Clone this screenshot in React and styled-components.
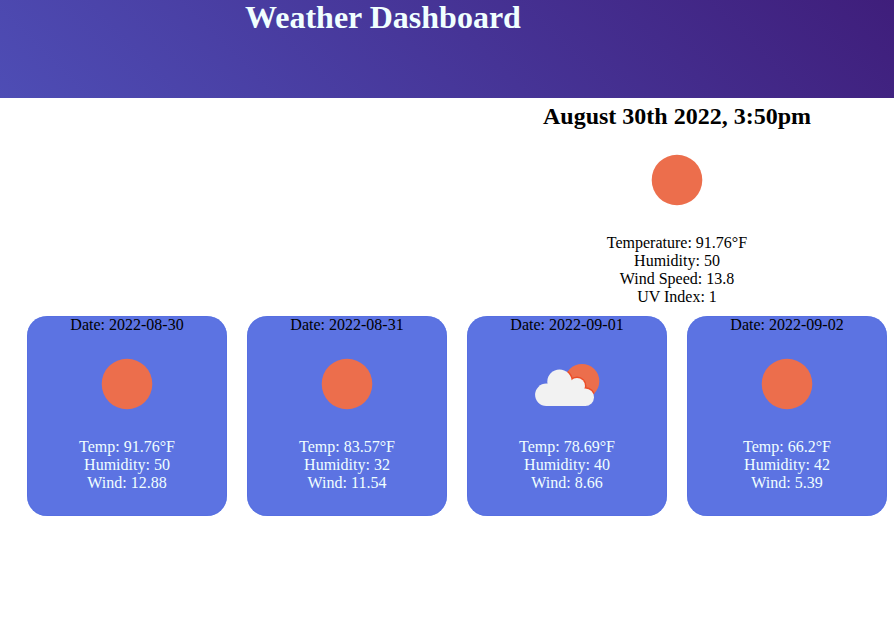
import React from "react";
import styled, { createGlobalStyle } from "styled-components";

const GlobalStyle = createGlobalStyle`
  *, *::before, *::after { box-sizing: border-box; }
  body {
    margin: 0;
    background: #fff;
    color: #000;
    font: 16px/18px "Liberation Serif", "Times New Roman", serif;
    overflow: hidden;
  }
`;

const Header = styled.header`
  height: 98px;
  padding-left: 245px;
  background: linear-gradient(45deg, #4e4db5, #3f1e7b);
`;

const Title = styled.h1`
  margin: 0;
  font-size: 32px;
  line-height: 34px;
  color: azure;
`;

const Current = styled.section`
  display: flex;
  flex-direction: column;
  align-items: center;
  width: 434px;
  margin-left: 460px;
  padding-top: 5px;
  text-align: center;
`;

const Timestamp = styled.h2`
  margin: 0;
  font-size: 24px;
  line-height: 27px;
`;

const Icon = styled.svg`
  display: block;
  width: 100px;
  height: 100px;
  margin-bottom: 4px;
`;

const Reading = styled.p`
  margin: 0;
`;

const Forecast = styled.section`
  display: flex;
  gap: 20px;
  padding: 10px 0 0 27px;
`;

const Card = styled.article`
  display: flex;
  flex: 0 0 200px;
  flex-direction: column;
  align-items: center;
  height: 200px;
  border-radius: 20px;
  background: #5c73e2;
  box-shadow: inset 0 0 1px #3158dc;
  color: azure;
`;

const CardDate = styled.time`
  color: #000;
`;

function Sun() {
  return (
    <Icon viewBox="0 0 100 100" role="img" aria-label="Clear sky">
      <circle cx="50" cy="50" r="25.3" fill="#ec6e4c" />
    </Icon>
  );
}

function CloudShape() {
  return (
    <>
      <circle cx="29.3" cy="60.8" r="11.2" />
      <circle cx="42.5" cy="47.6" r="12.2" />
      <circle cx="60" cy="52" r="8" />
      <circle cx="68.200" cy="63.200" r="8.800" />
      <path d="M29 52H62L69 60V72H29Z" />
    </>
  );
}

function PartlyCloudy() {
  return (
    <Icon viewBox="0 0 100 100" role="img" aria-label="Few clouds">
      <clipPath id="sun-disc">
        <circle cx="65" cy="47.2" r="17.3" />
      </clipPath>
      <circle cx="65" cy="47.2" r="17.3" fill="#ec6e4c" />
      <g clipPath="url(#sun-disc)" fill="#ec4d27" stroke="#ec4d27" strokeWidth="3">
        <CloudShape />
      </g>
      <g fill="#f2f2f2">
        <CloudShape />
      </g>
    </Icon>
  );
}

const days = [
  { date: "2022-08-30", temp: "91.76", humidity: 50, wind: "12.88", Weather: Sun },
  { date: "2022-08-31", temp: "83.57", humidity: 32, wind: "11.54", Weather: Sun },
  { date: "2022-09-01", temp: "78.69", humidity: 40, wind: "8.66", Weather: PartlyCloudy },
  { date: "2022-09-02", temp: "66.2", humidity: 42, wind: "5.39", Weather: Sun },
];

export default function App() {
  return (
    <>
      <GlobalStyle />
      <Header>
        <Title>Weather Dashboard</Title>
      </Header>
      <main>
        <Current>
          <Timestamp>August 30th 2022, 3:50pm</Timestamp>
          <Sun />
          <Reading>Temperature: 91.76°F</Reading>
          <Reading>Humidity: 50</Reading>
          <Reading>Wind Speed: 13.8</Reading>
          <Reading>UV Index: 1</Reading>
        </Current>
        <Forecast>
          {days.map(({ date, temp, humidity, wind, Weather }) => (
            <Card key={date}>
              <CardDate dateTime={date}>Date: {date}</CardDate>
              <Weather />
              <Reading>Temp: {temp}°F</Reading>
              <Reading>Humidity: {humidity}</Reading>
              <Reading>Wind: {wind}</Reading>
            </Card>
          ))}
        </Forecast>
      </main>
    </>
  );
}
